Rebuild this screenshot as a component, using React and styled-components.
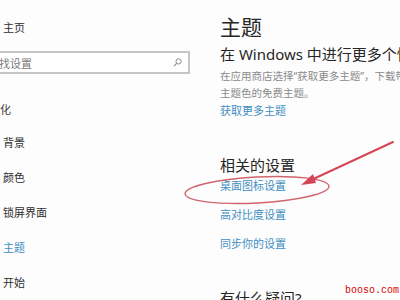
import React from "react";
import styled, { createGlobalStyle } from "styled-components";

const GlobalStyle = createGlobalStyle`
  html, body {
    margin: 0;
    padding: 0;
    background: #fdfdfd;
  }
  body {
    width: 400px;
    height: 300px;
    overflow: hidden;
    font-family: "Noto Sans", "Noto Sans CJK SC", sans-serif;
    color: #2e2e2e;
  }
`;

const navItems = ["背景", "颜色", "锁屏界面", "主题", "开始"];
const related = ["桌面图标设置", "高对比度设置", "同步你的设置"];

function App() {
  return (
    <>
      <GlobalStyle />
      <Window>
        <Sidebar>
          <HomeItem>主页</HomeItem>
          <SearchBox>
            <Placeholder>查找设置</Placeholder>
            <SearchIcon viewBox="0 0 10 10">
              <circle cx="6.2" cy="3.8" r="2.9" fill="none" stroke="#8a8a8a" strokeWidth="1.1" />
              <line x1="4.1" y1="5.9" x2="1" y2="9" stroke="#8a8a8a" strokeWidth="1.2" />
            </SearchIcon>
          </SearchBox>
          <Category>个性化</Category>
          <NavList>
            {navItems.map((item) => (
              <NavItem key={item} $active={item === "主题"}>
                {item}
              </NavItem>
            ))}
          </NavList>
        </Sidebar>
        <Main>
          <Title>主题</Title>
          <Subtitle>在 Windows 中进行更多个性化设置</Subtitle>
          <Description>
            在应用商店选择“获取更多主题”，下载带有精美背景、声音和
            <br />
            主题色的免费主题。
          </Description>
          <Link>获取更多主题</Link>
          <Section>相关的设置</Section>
          {related.map((item, i) => (
            <Link key={item} $gap={i === 0 ? 3 : 13}>
              {item}
            </Link>
          ))}
          <Section $gap={36}>有什么疑问?</Section>
        </Main>
        <Annotation viewBox="0 0 400 300">
          <ellipse
            cx="257"
            cy="190"
            rx="72"
            ry="13"
            transform="rotate(-3 257 190)"
            fill="none"
            stroke="#c94a55"
            strokeWidth="1.4"
            opacity="0.85"
          />
          <path d="M393 142 L309 181" stroke="#d64556" strokeWidth="2" strokeLinecap="round" />
          <polygon points="301,185 313,174 316,183" fill="#d64556" />
        </Annotation>
        <Watermark>booso.com</Watermark>
      </Window>
    </>
  );
}

const Window = styled.div`
  position: relative;
  display: flex;
  width: 400px;
  height: 300px;
  overflow: hidden;
  background: #fdfdfd;
`;

const Sidebar = styled.nav`
  flex: none;
  width: 214px;
  margin-left: -24px;
  display: flex;
  flex-direction: column;
  font-size: 11px;
`;

const HomeItem = styled.div`
  margin-top: 21px;
  padding-left: 27px;
  line-height: 14px;
  color: #2e2e2e;
`;

const SearchBox = styled.div`
  margin-top: 16px;
  height: 23px;
  box-sizing: border-box;
  border: 2px solid #c6c6c6;
  display: flex;
  align-items: center;
  justify-content: space-between;
  padding: 0 6px 0 10px;
  background: #fff;
`;

const Placeholder = styled.span`
  color: #7a7a7a;
  font-size: 11px;
`;

const SearchIcon = styled.svg`
  width: 9px;
  height: 9px;
`;

const Category = styled.div`
  margin-top: 29px;
  padding-left: 2px;
  line-height: 14px;
  color: #3a3a3a;
`;

const NavList = styled.div`
  margin-top: 8px;
  display: flex;
  flex-direction: column;
`;

const NavItem = styled.div`
  height: 35px;
  line-height: 35px;
  padding-left: 27px;
  color: ${(p) => (p.$active ? "#3f8fc2" : "#2e2e2e")};
`;

const Main = styled.main`
  flex: 1;
  min-width: 0;
  padding-left: 30px;
  display: flex;
  flex-direction: column;
  white-space: nowrap;
  overflow: hidden;
`;

const Title = styled.h1`
  margin: 14px 0 0;
  font-size: 21px;
  font-weight: 400;
  line-height: 26px;
  color: #262626;
`;

const Subtitle = styled.h2`
  margin: 4px 0 0;
  font-size: 15px;
  font-weight: 400;
  line-height: 20px;
  color: #262626;
`;

const Description = styled.p`
  margin: 3.5px 0 0;
  font-size: 10.5px;
  line-height: 17px;
  color: #8a8a8a;
`;

const Link = styled.div`
  margin-top: ${(p) => (p.$gap != null ? p.$gap : 1)}px;
  font-size: 11px;
  line-height: 16px;
  color: #3f8fc2;
`;

const Section = styled.h3`
  margin: ${(p) => (p.$gap != null ? p.$gap : 36)}px 0 0;
  font-size: 15px;
  font-weight: 400;
  line-height: 20px;
  color: #262626;
`;

const Annotation = styled.svg`
  position: absolute;
  left: 0;
  top: 0;
  width: 400px;
  height: 300px;
  pointer-events: none;
`;

const Watermark = styled.span`
  position: absolute;
  right: 1px;
  bottom: 3px;
  font-family: "Liberation Mono", monospace;
  font-size: 10px;
  line-height: 12px;
  color: #e00000;
  background: #fff;
`;

export default App;
